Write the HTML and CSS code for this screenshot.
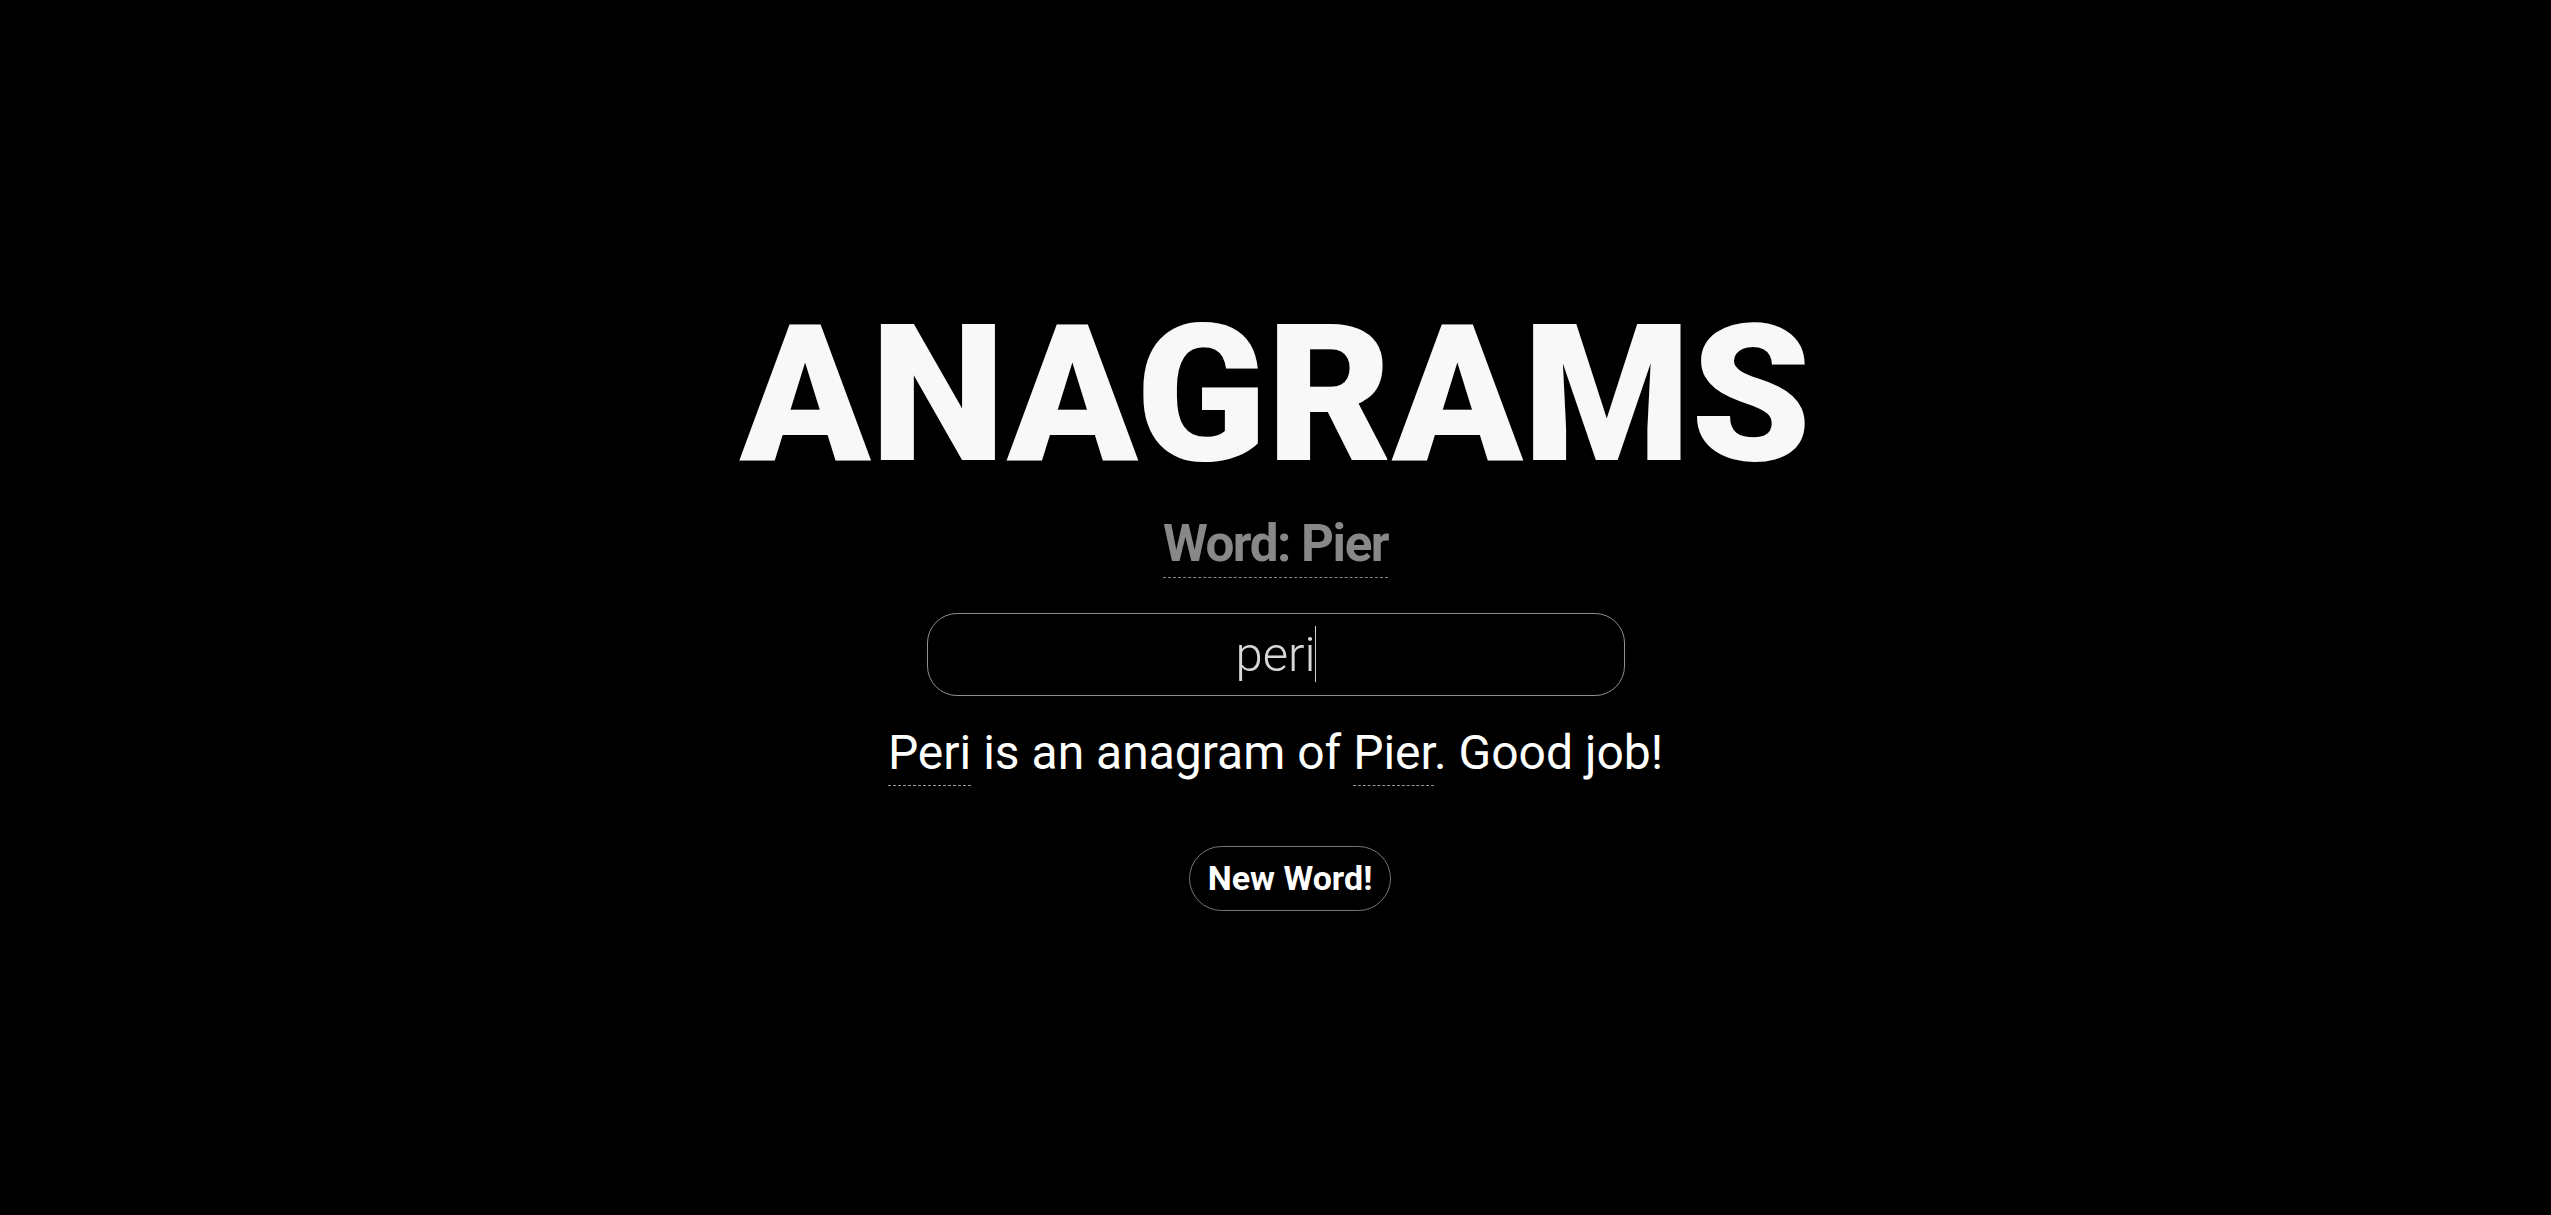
FILE: index.html
```html
<!DOCTYPE html>
<html lang="en">
<head>
<meta charset="utf-8">
<title>Anagrams</title>
<link rel="stylesheet" href="styles.css">
</head>
<body>
<main class="game">
  <h1 class="title">ANAGRAMS</h1>
  <p class="word"><span class="mark">Word: Pier</span></p>
  <label class="field">
    <input class="guess" type="text" value="peri">
    <span class="caret"></span>
  </label>
  <p class="result"><span class="mark">Peri</span> is an anagram of <span class="mark">Pier</span>. Good job!</p>
  <button class="new-word" type="button">New Word!</button>
</main>
</body>
</html>
```
FILE: styles.css
```css
html, body {
  margin: 0;
  padding: 0;
  background: #000;
}
body {
  font-family: Roboto, "Liberation Sans", sans-serif;
  color: #fff;
  min-height: 100vh;
}
.game {
  display: flex;
  flex-direction: column;
  align-items: center;
  padding-top: 299px;
}
.title {
  margin: 0;
  font-size: 192px;
  line-height: 192px;
  font-weight: 900;
  color: #f8f8f8;
}
.word {
  margin: 22px 0 0;
  font-size: 51.2px;
  line-height: 61px;
  font-weight: 700;
  letter-spacing: -1.5px;
  color: #888;
}
.mark {
  border-bottom: 1px dashed #888;
  padding-bottom: 3px;
}
.field {
  position: relative;
  display: block;
  margin-top: 39px;
  width: 698px;
  height: 83px;
}
.guess {
  box-sizing: border-box;
  width: 100%;
  height: 100%;
  margin: 0;
  border: 1px solid #8f8f8f;
  border-radius: 30px;
  background: #000;
  color: #d8d8d8;
  font-family: Roboto, "Liberation Sans", sans-serif;
  font-size: 49px;
  font-weight: 300;
  text-align: center;
  outline: none;
  padding: 0 20px;
}
.caret {
  position: absolute;
  left: 388px;
  top: 13px;
  width: 1px;
  height: 56px;
  background: #cfcfcf;
}
.result {
  margin: 28px 0 0;
  font-size: 48px;
  line-height: 58px;
  font-weight: 400;
  color: #fff;
}
.result .mark {
  border-bottom-color: #999;
  padding-bottom: 4px;
}
.new-word {
  margin-top: 64px;
  margin-left: 29px;
  box-sizing: border-box;
  height: 65px;
  padding: 0 18px;
  border: 1px solid #777;
  border-radius: 33px;
  background: #000;
  color: #fff;
  font-family: Roboto, "Liberation Sans", sans-serif;
  font-size: 34px;
  font-weight: 700;
  line-height: 63px;
  cursor: pointer;
}
```
